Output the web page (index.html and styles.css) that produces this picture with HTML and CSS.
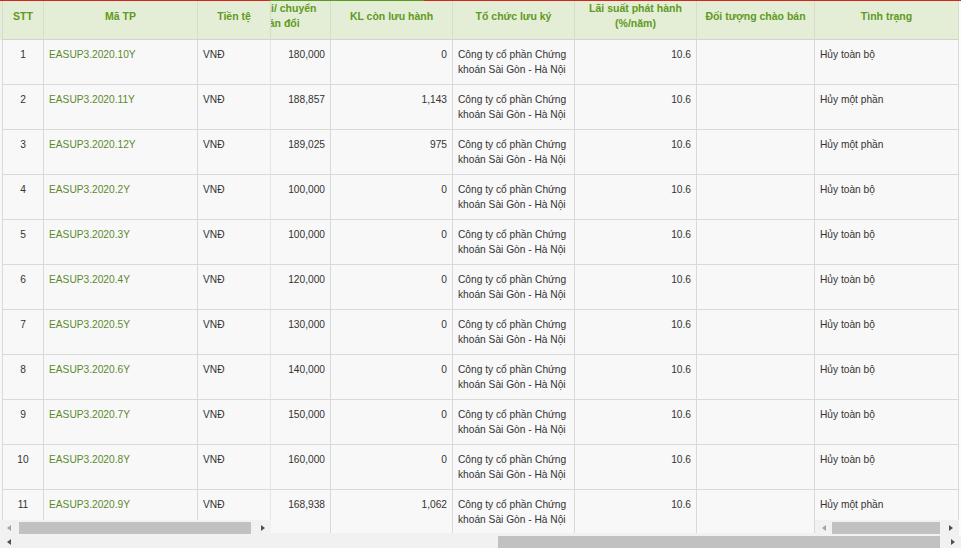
FILE: index.html
```html
<!DOCTYPE html>
<html lang="vi">
<head>
<meta charset="utf-8">
<title>Danh sách trái phiếu</title>
<link rel="stylesheet" href="styles.css">
</head>
<body>
<div class="grid-wrap">
  <div class="tabline"><div class="tl-red tl-a"></div><div class="tl-green"></div><div class="tl-red tl-b"></div></div>
  <div class="panels">
    <div class="panel panel-left">
      <div class="panel-body">
        <div class="row head">
          <div class="cell th c-first">STT</div>
          <div class="cell th">Mã TP</div>
          <div class="cell th c-edge">Tiền tệ</div>
        </div>
        <div class="row"><div class="cell c-first center">1</div><div class="cell link">EASUP3.2020.10Y</div><div class="cell c-edge">VNĐ</div></div>
        <div class="row"><div class="cell c-first center">2</div><div class="cell link">EASUP3.2020.11Y</div><div class="cell c-edge">VNĐ</div></div>
        <div class="row"><div class="cell c-first center">3</div><div class="cell link">EASUP3.2020.12Y</div><div class="cell c-edge">VNĐ</div></div>
        <div class="row"><div class="cell c-first center">4</div><div class="cell link">EASUP3.2020.2Y</div><div class="cell c-edge">VNĐ</div></div>
        <div class="row"><div class="cell c-first center">5</div><div class="cell link">EASUP3.2020.3Y</div><div class="cell c-edge">VNĐ</div></div>
        <div class="row"><div class="cell c-first center">6</div><div class="cell link">EASUP3.2020.4Y</div><div class="cell c-edge">VNĐ</div></div>
        <div class="row"><div class="cell c-first center">7</div><div class="cell link">EASUP3.2020.5Y</div><div class="cell c-edge">VNĐ</div></div>
        <div class="row"><div class="cell c-first center">8</div><div class="cell link">EASUP3.2020.6Y</div><div class="cell c-edge">VNĐ</div></div>
        <div class="row"><div class="cell c-first center">9</div><div class="cell link">EASUP3.2020.7Y</div><div class="cell c-edge">VNĐ</div></div>
        <div class="row"><div class="cell c-first center">10</div><div class="cell link">EASUP3.2020.8Y</div><div class="cell c-edge">VNĐ</div></div>
        <div class="row"><div class="cell c-first center">11</div><div class="cell link">EASUP3.2020.9Y</div><div class="cell c-edge">VNĐ</div></div>
      </div>
      <div class="hscroll">
        <div class="sb-arrow sb-left off"></div>
        <div class="sb-track"><div class="sb-thumb" style="margin-left:2px;width:232px"></div></div>
        <div class="sb-arrow sb-right"></div>
      </div>
    </div>

    <div class="panel panel-mid">
      <div class="panel-body">
        <div class="mid-inner">
          <div class="row head">
            <div class="cell th">KL phát hành lại/ chuyển<br>nhượng/ hoán đổi</div>
            <div class="cell th">KL còn lưu hành</div>
            <div class="cell th">Tổ chức lưu ký</div>
            <div class="cell th">Lãi suất phát hành (%/năm)</div>
            <div class="cell th">Đối tượng chào bán</div>
          </div>
          <div class="row"><div class="cell num">180,000</div><div class="cell num">0</div><div class="cell">Công ty cổ phần Chứng khoán Sài Gòn - Hà Nội</div><div class="cell num">10.6</div><div class="cell"></div></div>
          <div class="row"><div class="cell num">188,857</div><div class="cell num">1,143</div><div class="cell">Công ty cổ phần Chứng khoán Sài Gòn - Hà Nội</div><div class="cell num">10.6</div><div class="cell"></div></div>
          <div class="row"><div class="cell num">189,025</div><div class="cell num">975</div><div class="cell">Công ty cổ phần Chứng khoán Sài Gòn - Hà Nội</div><div class="cell num">10.6</div><div class="cell"></div></div>
          <div class="row"><div class="cell num">100,000</div><div class="cell num">0</div><div class="cell">Công ty cổ phần Chứng khoán Sài Gòn - Hà Nội</div><div class="cell num">10.6</div><div class="cell"></div></div>
          <div class="row"><div class="cell num">100,000</div><div class="cell num">0</div><div class="cell">Công ty cổ phần Chứng khoán Sài Gòn - Hà Nội</div><div class="cell num">10.6</div><div class="cell"></div></div>
          <div class="row"><div class="cell num">120,000</div><div class="cell num">0</div><div class="cell">Công ty cổ phần Chứng khoán Sài Gòn - Hà Nội</div><div class="cell num">10.6</div><div class="cell"></div></div>
          <div class="row"><div class="cell num">130,000</div><div class="cell num">0</div><div class="cell">Công ty cổ phần Chứng khoán Sài Gòn - Hà Nội</div><div class="cell num">10.6</div><div class="cell"></div></div>
          <div class="row"><div class="cell num">140,000</div><div class="cell num">0</div><div class="cell">Công ty cổ phần Chứng khoán Sài Gòn - Hà Nội</div><div class="cell num">10.6</div><div class="cell"></div></div>
          <div class="row"><div class="cell num">150,000</div><div class="cell num">0</div><div class="cell">Công ty cổ phần Chứng khoán Sài Gòn - Hà Nội</div><div class="cell num">10.6</div><div class="cell"></div></div>
          <div class="row"><div class="cell num">160,000</div><div class="cell num">0</div><div class="cell">Công ty cổ phần Chứng khoán Sài Gòn - Hà Nội</div><div class="cell num">10.6</div><div class="cell"></div></div>
          <div class="row"><div class="cell num">168,938</div><div class="cell num">1,062</div><div class="cell">Công ty cổ phần Chứng khoán Sài Gòn - Hà Nội</div><div class="cell num">10.6</div><div class="cell"></div></div>
        </div>
      </div>
      <div class="mid-foot"></div>
    </div>

    <div class="panel panel-right">
      <div class="panel-body">
        <div class="row head"><div class="cell th">Tình trạng</div></div>
        <div class="row"><div class="cell">Hủy toàn bộ</div></div>
        <div class="row"><div class="cell">Hủy một phần</div></div>
        <div class="row"><div class="cell">Hủy một phần</div></div>
        <div class="row"><div class="cell">Hủy toàn bộ</div></div>
        <div class="row"><div class="cell">Hủy toàn bộ</div></div>
        <div class="row"><div class="cell">Hủy toàn bộ</div></div>
        <div class="row"><div class="cell">Hủy toàn bộ</div></div>
        <div class="row"><div class="cell">Hủy toàn bộ</div></div>
        <div class="row"><div class="cell">Hủy toàn bộ</div></div>
        <div class="row"><div class="cell">Hủy toàn bộ</div></div>
        <div class="row"><div class="cell">Hủy một phần</div></div>
      </div>
      <div class="hscroll">
        <div class="sb-arrow sb-left off"></div>
        <div class="sb-track"><div class="sb-thumb" style="width:108px"></div></div>
        <div class="sb-arrow sb-right"></div>
      </div>
    </div>
  </div>

  <div class="hscroll main-scroll">
    <div class="sb-arrow sb-left"></div>
    <div class="sb-track"><div class="sb-thumb" style="margin-left:481px;width:442px"></div></div>
    <div class="sb-arrow sb-right"></div>
  </div>
</div>
</body>
</html>
```

FILE: styles.css
```css
* { box-sizing: border-box; }
html, body { margin: 0; padding: 0; }
body {
  width: 961px;
  height: 548px;
  overflow: hidden;
  background: #fbfbfb;
  font-family: "Liberation Sans", Arial, sans-serif;
  font-size: 10.2px;
  color: #333;
}
.grid-wrap { display: flex; flex-direction: column; }

.tabline { display: flex; height: 1px; flex: none; }
.tl-red { background: #d3271d; }
.tl-a { width: 270px; }
.tl-green { width: 154px; background: #5a9b1f; }
.tl-b { flex: 1; }

.panels { display: flex; height: 535px; flex: none; }
.panel { display: flex; flex-direction: column; background: #f8f8f8; }
.panel-body { flex: 1; min-height: 0; overflow: hidden; }
.panel-left { width: 271px; }
.panel-mid { width: 544px; }
.panel-right { width: 144px; }

.row { display: grid; height: 45px; background: #f8f8f8; }
.row.head { height: 39px; background: #e4edd5; }

.panel-left .row { grid-template-columns: 42px 154px 73px; padding-left: 2px; }
.mid-inner { width: 636px; margin-left: -92px; }
.mid-inner .row { grid-template-columns: 152px 122px 122px 122px 118px; }
.panel-right .row { grid-template-columns: 144px; }

.cell {
  border-right: 1px solid #d9d9d9;
  border-bottom: 1px solid #d9d9d9;
  padding: 7px 5px 0;
  line-height: 15px;
  overflow: hidden;
}
.c-first { border-left: 1px solid #d9d9d9; }
.c-edge { border-right-color: #e6e6e6; }

.th {
  display: flex;
  align-items: center;
  justify-content: center;
  text-align: center;
  padding: 2px 5px 10px;
  font-size: 10.5px;
  font-weight: bold;
  color: #5f9a22;
  border-right-color: #d6ddcc;
  border-bottom-color: #d3d3d3;
}
.center { text-align: center; }
.num { text-align: right; }
.link { color: #5b8a2d; }

.mid-foot { height: 3px; background: #f1f1f1; }

.hscroll { display: flex; height: 16px; background: #f1f1f1; flex: none; }
.sb-arrow { width: 17px; display: flex; align-items: center; justify-content: center; }
.sb-arrow::before { content: ""; width: 0; height: 0; border-style: solid; }
.sb-left::before { border-width: 3.5px 4px 3.5px 0; border-color: transparent #505050 transparent transparent; }
.sb-right::before { border-width: 3.5px 0 3.5px 4px; border-color: transparent transparent transparent #505050; }
.sb-left.off::before { border-right-color: #a3a3a3; }
.sb-right.off::before { border-left-color: #a3a3a3; }
.sb-track { flex: 1; display: flex; align-items: center; }
.sb-thumb { height: 12px; background: #c1c1c1; }

.main-scroll { height: 17px; align-items: flex-start; }
.main-scroll .sb-arrow, .main-scroll .sb-track { height: 12px; }
```
